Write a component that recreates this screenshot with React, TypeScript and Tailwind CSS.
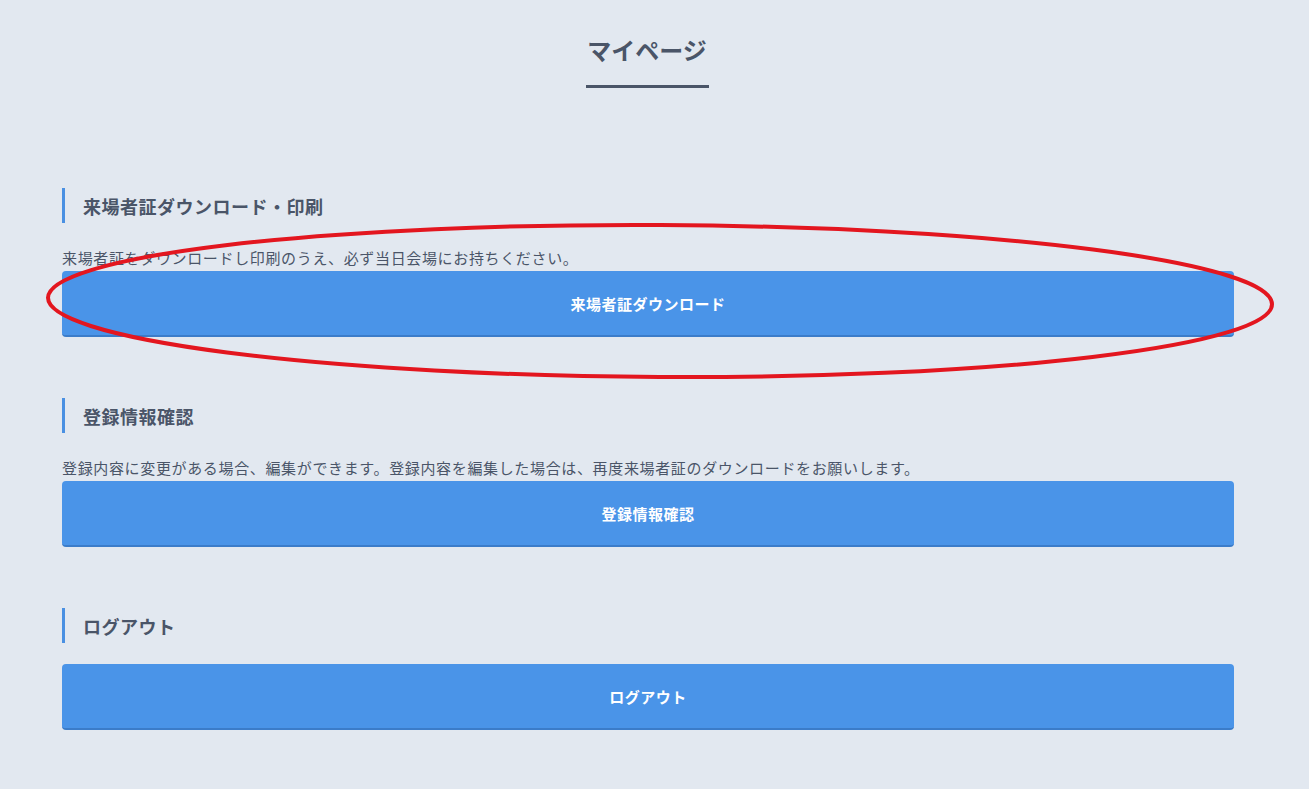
import React from "react";

const Section = ({
  title,
  desc,
  label,
}: {
  title: string;
  desc?: string;
  label: string;
}) => {
  return (
    <div className="flex flex-col">
      <div className="flex items-center h-[35px] border-l-[3px] border-[#4a90e2] pl-[18px]">
        <h2 className="text-[18px] font-bold text-[#4a5568] tracking-[0.5px] pt-[1px]">{title}</h2>
      </div>
      {desc ? (
        <p className="mt-[25px] text-[15px] leading-5 text-[#4a5568] tracking-[0.65px]">{desc}</p>
      ) : null}
      <button
        className={
          (desc ? "mt-[3px] " : "mt-[21px] ") +
          "h-[66px] w-full rounded-[4px] bg-[#4a94e8] border-b-2 border-[#3b7cc9] pt-[2px] text-white text-[15px] font-bold tracking-[0.5px]"
        }
      >
        {label}
      </button>
    </div>
  );
};

export default function App() {
  return (
    <div
      className="relative min-h-screen bg-[#e2e8f0] pb-16"
      style={{ fontFamily: '"Noto Sans CJK JP", "Noto Sans", sans-serif' }}
    >
      <div className="w-[1294px] flex flex-col items-center pt-[34px]">
        <h1 className="text-[24px] leading-8 font-bold text-[#4a5568]">マイページ</h1>
        <div className="mt-[19px] h-[3px] w-[123px] bg-[#4a5568]"></div>
      </div>
      <div className="ml-[62px] w-[1172px] mt-[100px] flex flex-col gap-[61px]">
        <Section
          title="来場者証ダウンロード・印刷"
          desc="来場者証をダウンロードし印刷のうえ、必ず当日会場にお持ちください。"
          label="来場者証ダウンロード"
        />
        <Section
          title="登録情報確認"
          desc="登録内容に変更がある場合、編集ができます。登録内容を編集した場合は、再度来場者証のダウンロードをお願いします。"
          label="登録情報確認"
        />
        <Section title="ログアウト" label="ログアウト" />
      </div>
      <svg className="absolute left-0 top-0 pointer-events-none" width="1309" height="789">
        <ellipse
          cx="660"
          cy="301"
          rx="612"
          ry="76"
          fill="none"
          stroke="#e3161f"
          strokeWidth="4"
          transform="rotate(0.3 660 301)"
        />
      </svg>
    </div>
  );
}
